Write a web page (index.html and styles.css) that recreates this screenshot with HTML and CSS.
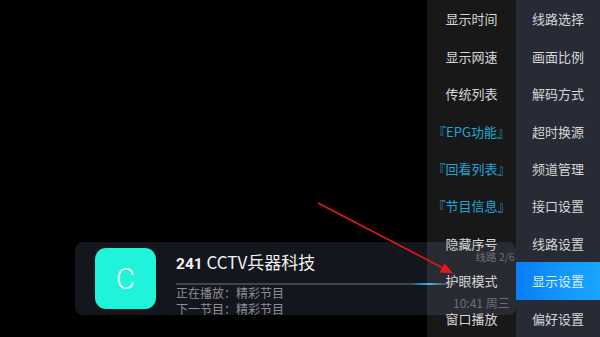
FILE: index.html
```html
<!DOCTYPE html>
<html lang="zh">
<head>
<meta charset="utf-8">
<link rel="stylesheet" href="styles.css">
</head>
<body>
<div class="stage">
  <div class="card">
    <div class="logo">C</div>
    <div class="info">
      <div class="title"><b>241</b> CCTV兵器科技</div>
      <div class="bar"></div>
      <div class="sub">正在播放：精彩节目</div>
      <div class="sub">下一节目：精彩节目</div>
    </div>
    <div class="meta">
      <span class="line">线路 2/6</span>
      <span class="time">10:41 周三</span>
    </div>
  </div>

  <div class="menu">
    <div class="col col-left">
      <div class="item">显示时间</div>
      <div class="item">显示网速</div>
      <div class="item">传统列表</div>
      <div class="item accent">『EPG功能』</div>
      <div class="item accent">『回看列表』</div>
      <div class="item accent">『节目信息』</div>
      <div class="item">隐藏序号</div>
      <div class="item">护眼模式</div>
      <div class="item">窗口播放</div>
    </div>
    <div class="col col-right">
      <div class="item">线路选择</div>
      <div class="item">画面比例</div>
      <div class="item">解码方式</div>
      <div class="item">超时换源</div>
      <div class="item">频道管理</div>
      <div class="item">接口设置</div>
      <div class="item">线路设置</div>
      <div class="item active">显示设置</div>
      <div class="item">偏好设置</div>
    </div>
  </div>

  <svg class="arrow" width="600" height="337" viewBox="0 0 600 337">
    <line x1="318" y1="203" x2="444" y2="268.5" stroke="#e5171c" stroke-width="1.6"/>
    <polygon points="453,273.5 439.5,272.5 444.5,263" fill="#e5171c"/>
  </svg>
</div>
</body>
</html>
```

FILE: styles.css
```css
html, body {
  margin: 0;
  padding: 0;
  background: #000;
}

body {
  font-family: "Noto Sans CJK SC", "Noto Sans", sans-serif;
}

.stage {
  position: relative;
  width: 600px;
  height: 337px;
  overflow: hidden;
  background: #000;
}

.card {
  position: absolute;
  left: 75px;
  top: 242px;
  width: 441px;
  height: 73px;
  box-sizing: border-box;
  padding: 7px 4px 6px 20px;
  border-radius: 8px;
  background: #13161d;
  display: flex;
  align-items: flex-start;
}

.logo {
  width: 61px;
  height: 61px;
  flex: none;
  margin-top: -1px;
  border-radius: 11px;
  background: #1ff4da;
  color: #ffffff;
  font-family: Roboto, "Noto Sans", sans-serif;
  font-weight: 300;
  font-size: 29px;
  display: flex;
  align-items: center;
  justify-content: center;
}

.info {
  margin-left: 20px;
  padding-top: 3px;
  flex: none;
  width: 277px;
}

.title {
  font-size: 17px;
  line-height: 20px;
  color: #f2f2f2;
  white-space: nowrap;
}

.title b {
  font-family: Roboto, "Noto Sans", sans-serif;
  font-size: 15.5px;
  font-weight: 700;
}

.bar {
  margin-top: 9px;
  height: 2px;
  width: 279px;
  background: linear-gradient(90deg, #41454e 0%, #41454e 84%, #2a90c0 88%, #3aa8d8 91%, #41454e 96%, #41454e 100%);
}

.sub {
  font-size: 12px;
  line-height: 16px;
  color: #8e9095;
  white-space: nowrap;
}

.meta {
  flex: 1;
  height: 61px;
  display: flex;
  flex-direction: column;
  align-items: flex-end;
  justify-content: space-between;
  color: #5e6168;
  white-space: nowrap;
}

.meta .line {
  font-size: 10.5px;
  line-height: 14px;
  margin-top: 1px;
}

.meta .time {
  font-size: 12px;
  line-height: 14px;
  padding-right: 5px;
}

.menu {
  position: absolute;
  top: 0;
  right: 0;
  height: 337px;
  display: grid;
  grid-template-columns: 89px 84px;
}

.col {
  display: grid;
  grid-template-rows: repeat(9, 1fr);
}

.col-left {
  background: rgba(255, 255, 255, 0.095);
}

.col-right {
  background: #272b35;
}

.item {
  display: flex;
  align-items: center;
  justify-content: center;
  font-size: 13px;
  color: #d6d6d6;
  white-space: nowrap;
}

.item.accent {
  color: #1ea6d6;
}

.item.active {
  background: linear-gradient(90deg, #0a7cf8 0%, #139af9 60%, #19a4ff 100%);
  color: #d9ecff;
}

.arrow {
  position: absolute;
  left: 0;
  top: 0;
  pointer-events: none;
}
```
